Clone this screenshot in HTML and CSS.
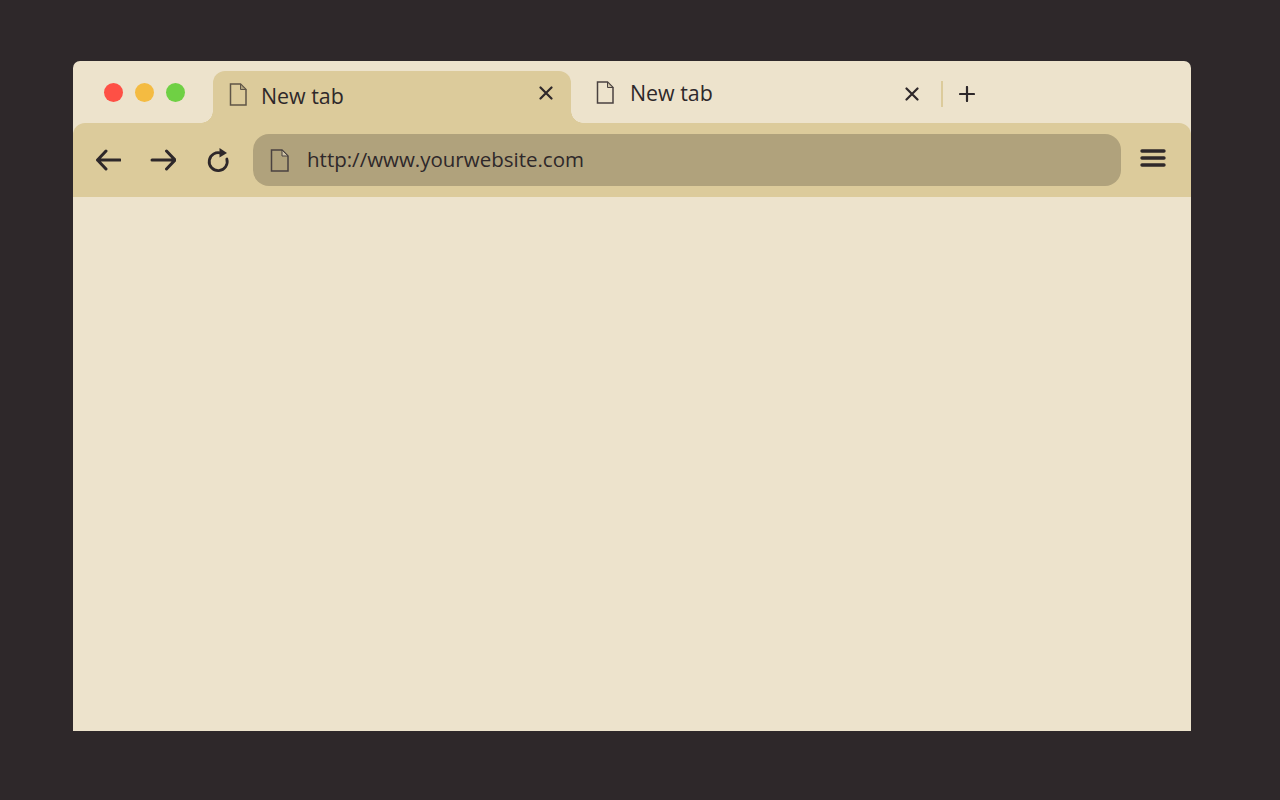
FILE: index.html
```html
<!DOCTYPE html>
<html lang="en">
<head>
<meta charset="utf-8">
<title>Browser window</title>
<link rel="stylesheet" href="styles.css">
</head>
<body>
<main class="window">
  <header class="tabbar">
    <div class="lights">
      <span class="light red"></span>
      <span class="light yellow"></span>
      <span class="light green"></span>
    </div>
    <div class="tab active">
      <svg class="doc" width="18" height="23" viewBox="0 0 18 23"><path d="M1.500 1H11.500L17 6.500V22H1.500Z" fill="none" stroke="#5f5547" stroke-width="1.500"/><path d="M11.500 1V6.500H17Z" fill="#b0a27c" stroke="#5f5547" stroke-width="1"/></svg>
      <span class="tab-title">New tab</span>
      <svg class="close" width="14" height="14" viewBox="0 0 14 14"><path d="M1.500 1.500L12.500 12.500M12.500 1.500L1.500 12.500" stroke="#2e282a" stroke-width="2.200" stroke-linecap="round"/></svg>
    </div>
    <div class="tab inactive">
      <svg class="doc" width="18" height="23" viewBox="0 0 18 23"><path d="M1.500 1H11.500L17 6.500V22H1.500Z" fill="none" stroke="#4a4240" stroke-width="1.500"/><path d="M11.500 1V6.500H17Z" fill="#cfc4a8" stroke="#4a4240" stroke-width="1"/></svg>
      <span class="tab-title">New tab</span>
      <svg class="close" width="14" height="14" viewBox="0 0 14 14"><path d="M1.500 1.500L12.500 12.500M12.500 1.500L1.500 12.500" stroke="#2e282a" stroke-width="2.200" stroke-linecap="round"/></svg>
    </div>
    <span class="divider"></span>
    <svg class="plus" width="16" height="16" viewBox="0 0 16 16"><path d="M8 1V15M1 8H15" stroke="#2e282a" stroke-width="2.200" stroke-linecap="round"/></svg>
  </header>
  <nav class="toolbar">
    <svg class="nav-icon" width="26" height="22" viewBox="0 0 26 22"><path d="M25 11H2.500M11 2L2.500 11L11 20" fill="none" stroke="#2e282a" stroke-width="3" stroke-linecap="round" stroke-linejoin="round"/></svg>
    <svg class="nav-icon forward" width="26" height="22" viewBox="0 0 26 22"><path d="M2 11H25M16.500 2L25 11L16.500 20" fill="none" stroke="#2e282a" stroke-width="3" stroke-linecap="round" stroke-linejoin="round"/></svg>
    <svg class="nav-icon reload" width="24" height="26" viewBox="0 0 24 26"><path d="M15.500 6.300A9 9 0 1 0 20.800 12" fill="none" stroke="#2e282a" stroke-width="2.800" stroke-linecap="round"/><path d="M13.500 1L21 6L13.500 10.500Z" fill="#2e282a"/></svg>
    <div class="address">
      <svg class="doc" width="19" height="23" viewBox="0 0 19 23"><path d="M1.500 1H12L18 7V22H1.500Z" fill="none" stroke="#4a4240" stroke-width="1.500"/><path d="M12 1V7H18Z" fill="#cfc4a8" stroke="#4a4240" stroke-width="1"/></svg>
      <span class="url">http://www.yourwebsite.com</span>
    </div>
    <svg class="menu" width="26" height="20" viewBox="0 0 26 20"><path d="M2 3H24M2 10H24M2 17H24" stroke="#2e282a" stroke-width="3.400" stroke-linecap="round"/></svg>
  </nav>
  <section class="content"></section>
</main>
</body>
</html>
```
FILE: styles.css
```css
* { box-sizing: border-box; }
html, body { height: 100%; }
body {
  margin: 0;
  background: #2e282a;
  display: flex;
  flex-direction: column;
  padding: 61px 89px 69px 73px;
  font-family: "Open Sans", sans-serif;
  color: #2e282a;
}
.window {
  flex: 1;
  display: flex;
  flex-direction: column;
  background: #ede3cc;
  border-radius: 7px 7px 0 0;
  overflow: hidden;
}
.tabbar {
  height: 62px;
  flex: none;
  display: flex;
  align-items: flex-start;
  padding-left: 31px;
}
.lights {
  display: flex;
  gap: 12px;
  width: 109px;
  padding-top: 22px;
}
.light { width: 19px; height: 19px; border-radius: 50%; }
.red { background: #fe5045; }
.yellow { background: #f4bb41; }
.green { background: #6fd044; }
.tab {
  position: relative;
  display: flex;
  align-items: center;
  font-size: 21.400px;
  line-height: 30px;
}
.tab.active {
  width: 358px;
  height: 52px;
  margin-top: 10px;
  padding: 0 18px 0 16px;
  background: #dccb9b;
  border-radius: 12px 12px 0 0;
}
.tab.active::before,
.tab.active::after {
  content: "";
  position: absolute;
  bottom: 0;
  width: 12px;
  height: 12px;
}
.tab.active::before {
  left: -12px;
  background: radial-gradient(circle at 0 0, transparent 11.500px, #dccb9b 12px);
}
.tab.active::after {
  right: -12px;
  background: radial-gradient(circle at 100% 0, transparent 11.500px, #dccb9b 12px);
}
.tab.inactive {
  width: 370px;
  height: 62px;
  padding: 0 22px 0 25px;
}
.active .doc { margin-top: -5px; }
.active .tab-title { margin: -3px 0 0 14px; }
.inactive .tab-title { margin: 2px 0 0 16px; }
.tab-title { flex: 1; }
.active .close { margin-top: -8px; }
.inactive .close { margin-top: 4px; }
.divider {
  width: 2px;
  height: 26px;
  margin-top: 20px;
  background: #dccb9b;
}
.plus { margin: 25px 0 0 16px; }
.toolbar {
  height: 74px;
  flex: none;
  display: flex;
  align-items: center;
  padding: 0 24px 0 22px;
  background: #dccb9b;
  border-radius: 12px 12px 0 0;
}
.nav-icon { flex: none; }
.forward { margin-left: 29px; }
.reload { margin-left: 30px; }
.address {
  width: 868px;
  height: 52px;
  margin-left: 23px;
  padding-left: 17px;
  display: flex;
  align-items: center;
  gap: 18px;
  border-radius: 16px;
  background: #b0a27c;
  font-size: 20.500px;
  line-height: 28px;
}
.address .doc { flex: none; }
.url { margin-top: -2px; }
.menu { margin: -4px 0 0 19px; flex: none; }
.content { flex: 1; }
```
